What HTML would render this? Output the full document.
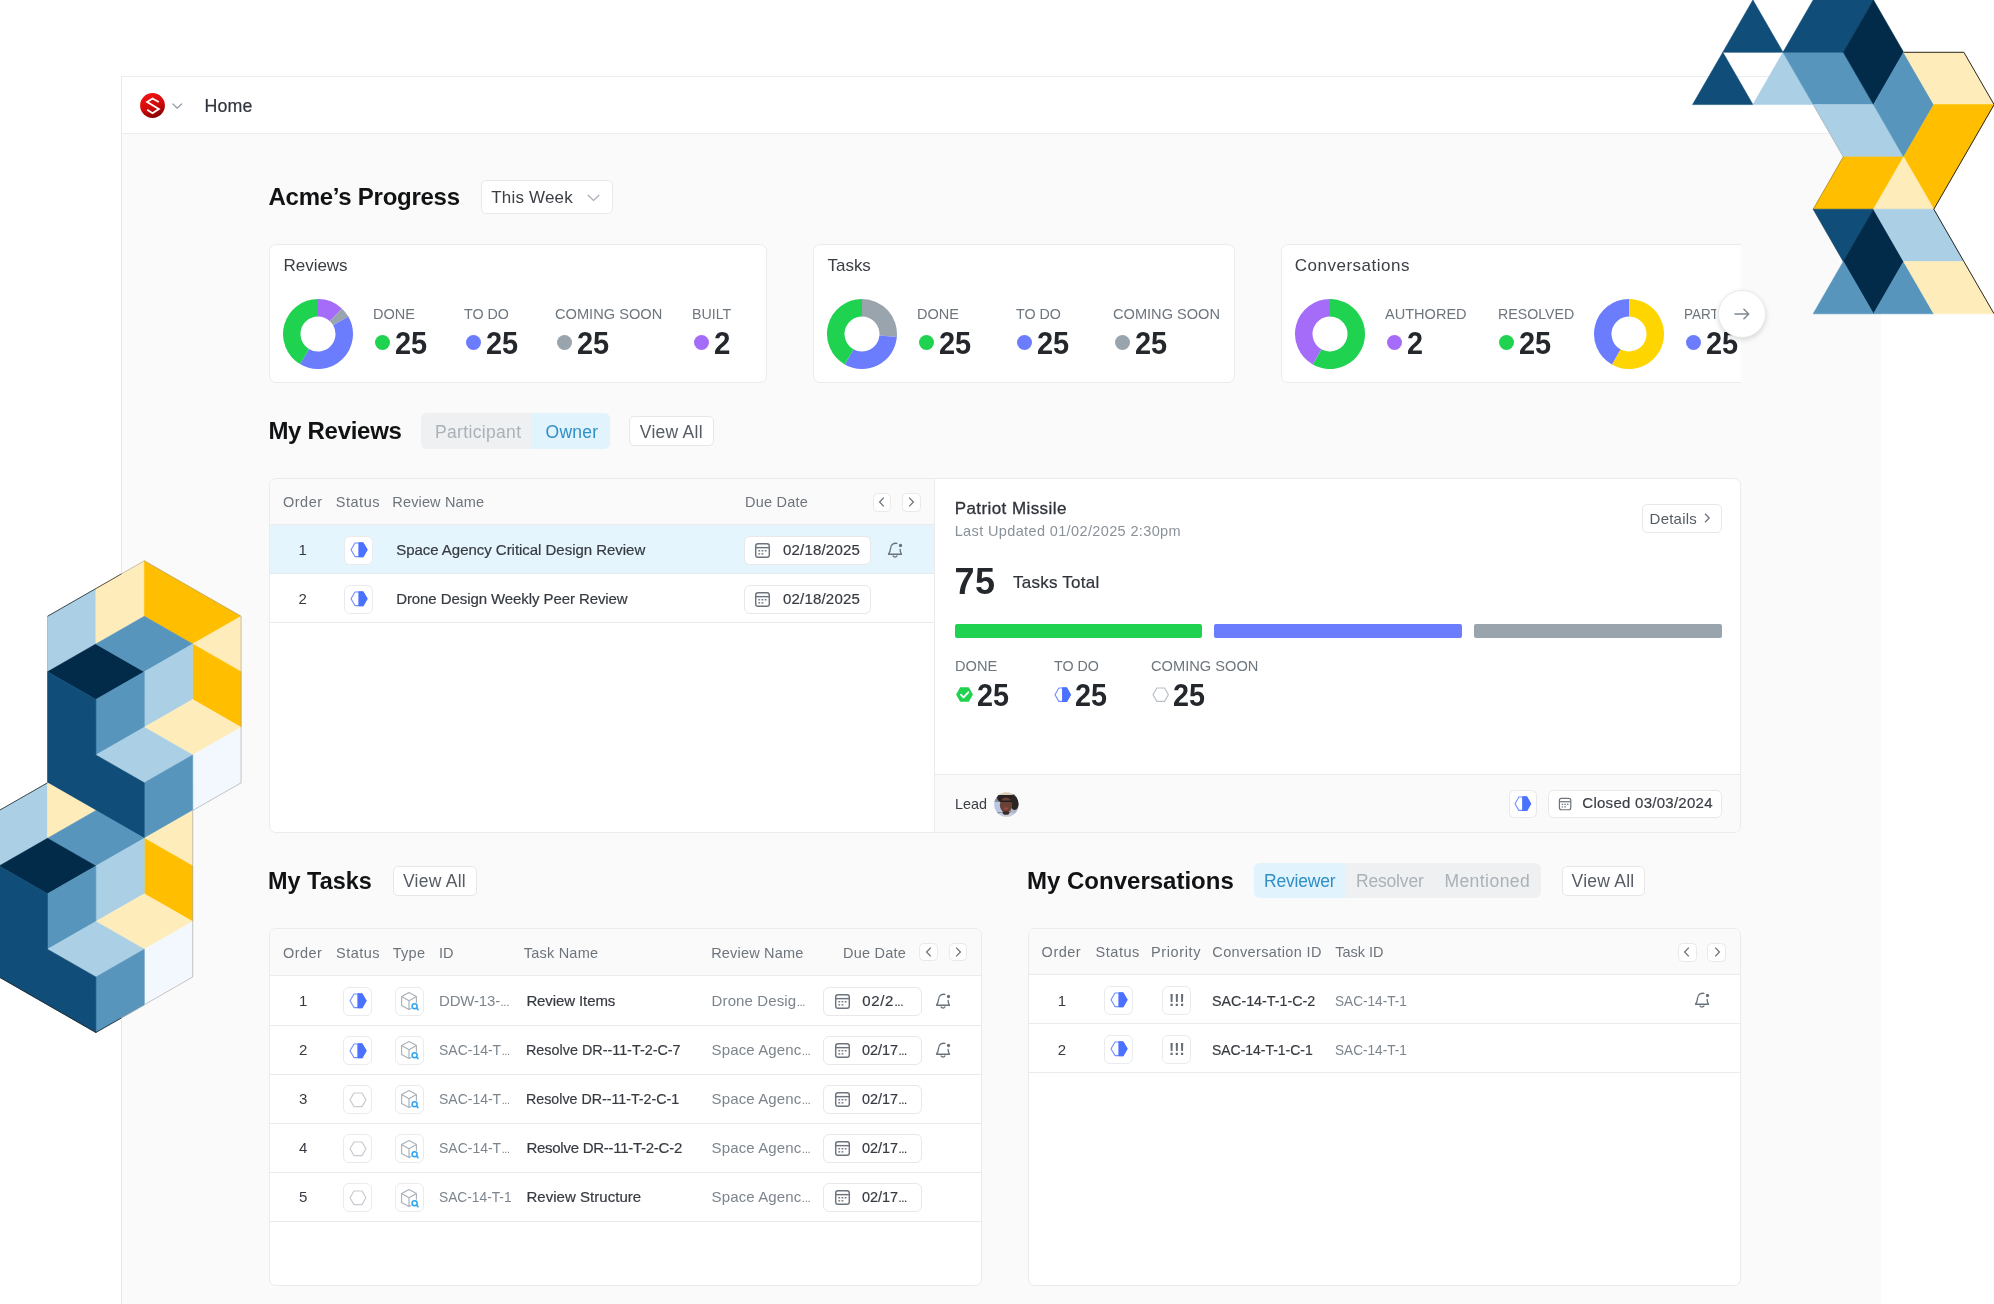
<!DOCTYPE html><html><head><meta charset="utf-8"><title>Home</title><style>html,body{margin:0;padding:0}body{width:1994px;height:1304px;overflow:hidden;background:#fff;position:relative;font-family:"Liberation Sans", sans-serif;}
.a{position:absolute;box-sizing:border-box}.t{position:absolute;white-space:pre;line-height:40px;height:40px}</style></head><body>
<div class="a" style="left:0;top:0;width:1994px;height:1304px;will-change:transform">
<div class="a" style="left:121px;top:76px;width:1760px;height:1240px;background:#fafafa;border-left:1px solid #e9e9e9;border-top:1px solid #ececec;box-sizing:border-box"></div>
<div class="a" style="left:122px;top:77px;width:1759px;height:57px;background:#fff;border-bottom:1px solid #ededed"></div>
<svg class="a" style="left:139px;top:91.5px" width="27" height="27" viewBox="0 0 27 27">
<defs><linearGradient id="lg" x1="0.3" y1="0" x2="0.7" y2="1"><stop offset="0" stop-color="#f51212"/><stop offset="0.55" stop-color="#cf0a0a"/><stop offset="1" stop-color="#7e0000"/></linearGradient></defs>
<circle cx="13.5" cy="13.5" r="12.4" fill="url(#lg)"/>
<path d="M19.8 10 L13.5 6.5 L8.2 10 L19.8 17 L13.5 21.2 L8.2 17.7" fill="none" stroke="#fff" stroke-width="1.9" stroke-linejoin="miter"/></svg>
<svg class="a" style="left:170px;top:100px" width="14" height="12" viewBox="0 0 14 12"><path d="M2.5 3.6 L7.2 8.2 L12 3.6" fill="none" stroke="#8b95a1" stroke-width="1.3"/></svg>
<div class="a" style="left:481px;top:179.5px;width:131.5px;height:34px;background:#fff;border:1px solid #e9e9e9;border-radius:5px;"></div>
<svg class="a" style="left:586px;top:192px" width="15" height="12" viewBox="0 0 15 12"><path d="M1.8 3 L7.5 8.4 L13.2 3" fill="none" stroke="#a7afb8" stroke-width="1.3"/></svg>
<div class="a" style="left:268.5px;top:244px;width:498.5px;height:139px;background:#fff;border:1px solid #ebebeb;border-radius:7px;"></div>
<svg class="a" style="left:282px;top:297.9px" width="72" height="72" viewBox="-36 -36 72 72"><path d="M0.00 -35.00 A35 35 0 0 1 23.87 -25.60 L11.93 -12.80 A17.5 17.5 0 0 0 0.00 -17.50 Z" fill="#a56cf9"/><path d="M23.87 -25.60 A35 35 0 0 1 30.31 -17.50 L15.16 -8.75 A17.5 17.5 0 0 0 11.93 -12.80 Z" fill="#99a4ad"/><path d="M30.31 -17.50 A35 35 0 0 1 -18.03 30.00 L-9.01 15.00 A17.5 17.5 0 0 0 15.16 -8.75 Z" fill="#6b7dfd"/><path d="M-18.03 30.00 A35 35 0 0 1 -0.00 -35.00 L-0.00 -17.50 A17.5 17.5 0 0 0 -9.01 15.00 Z" fill="#1fd24f"/></svg>
<div class="a" style="left:374.8px;top:335.0px;width:15px;height:15px;border-radius:50%;background:#1fd24f"></div>
<div class="a" style="left:465.9px;top:335.0px;width:15px;height:15px;border-radius:50%;background:#6b7dfd"></div>
<div class="a" style="left:556.6px;top:335.0px;width:15px;height:15px;border-radius:50%;background:#99a4ad"></div>
<div class="a" style="left:693.8px;top:335.0px;width:15px;height:15px;border-radius:50%;background:#a56cf9"></div>
<div class="a" style="left:812.5px;top:244px;width:422px;height:139px;background:#fff;border:1px solid #ebebeb;border-radius:7px;"></div>
<svg class="a" style="left:825.7px;top:297.9px" width="72" height="72" viewBox="-36 -36 72 72"><path d="M0.00 -35.00 A35 35 0 0 1 34.87 3.05 L17.43 1.53 A17.5 17.5 0 0 0 0.00 -17.50 Z" fill="#99a4ad"/><path d="M34.87 3.05 A35 35 0 0 1 -17.23 30.46 L-8.62 15.23 A17.5 17.5 0 0 0 17.43 1.53 Z" fill="#6b7dfd"/><path d="M-17.23 30.46 A35 35 0 0 1 -0.00 -35.00 L-0.00 -17.50 A17.5 17.5 0 0 0 -8.62 15.23 Z" fill="#1fd24f"/></svg>
<div class="a" style="left:918.8px;top:335.0px;width:15px;height:15px;border-radius:50%;background:#1fd24f"></div>
<div class="a" style="left:1016.8px;top:335.0px;width:15px;height:15px;border-radius:50%;background:#6b7dfd"></div>
<div class="a" style="left:1115.1px;top:335.0px;width:15px;height:15px;border-radius:50%;background:#99a4ad"></div>
<div class="a" style="left:1280.5px;top:244px;width:460.5px;height:140px;overflow:hidden"><div class="a" style="left:0;top:0;width:520px;height:139px;background:#fff;border:1px solid #ebebeb;border-radius:7px"></div></div>
<svg class="a" style="left:1293.5px;top:298px" width="72" height="72" viewBox="-36 -36 72 72"><path d="M0.00 -35.00 A35 35 0 1 1 -17.23 30.46 L-8.62 15.23 A17.5 17.5 0 1 0 0.00 -17.50 Z" fill="#1fd24f"/><path d="M-17.23 30.46 A35 35 0 0 1 -0.00 -35.00 L-0.00 -17.50 A17.5 17.5 0 0 0 -8.62 15.23 Z" fill="#a56cf9"/></svg>
<div class="a" style="left:1386.5px;top:335.0px;width:15px;height:15px;border-radius:50%;background:#a56cf9"></div>
<div class="a" style="left:1499.3px;top:335.0px;width:15px;height:15px;border-radius:50%;background:#1fd24f"></div>
<svg class="a" style="left:1593px;top:298px" width="72" height="72" viewBox="-36 -36 72 72"><path d="M0.00 -35.00 A35 35 0 1 1 -16.97 30.61 L-8.48 15.31 A17.5 17.5 0 1 0 0.00 -17.50 Z" fill="#ffd500"/><path d="M-16.97 30.61 A35 35 0 0 1 -0.00 -35.00 L-0.00 -17.50 A17.5 17.5 0 0 0 -8.48 15.31 Z" fill="#6b7dfd"/></svg>
<div class="a" style="left:1686.0px;top:335.0px;width:15px;height:15px;border-radius:50%;background:#6b7dfd"></div>
<div class="a" style="left:421px;top:413px;width:188.5px;height:35.5px;background:#eef0f1;border-radius:6px;"></div>
<div class="a" style="left:532px;top:413px;width:77.5px;height:35.5px;background:#e1f3fc;border-radius:0 6px 6px 0"></div>
<div class="a" style="left:629px;top:416px;width:84.5px;height:30px;background:#fff;border:1px solid #e7e7e7;border-radius:5px;"></div>
<div class="a" style="left:268.5px;top:478px;width:1472.5px;height:355px;background:#fff;border:1px solid #ebebeb;border-radius:7px;overflow:hidden"><div class="a" style="left:0;top:0;width:665px;height:46px;background:#fafafa;border-bottom:1px solid #ebebeb"></div><div class="a" style="left:0;top:46px;width:665px;height:49px;background:#e5f5fd;border-bottom:1px solid #e4ecf0"></div><div class="a" style="left:0;top:95px;width:665px;height:49px;border-bottom:1px solid #ebebeb"></div><div class="a" style="left:664.5px;top:0;width:1px;height:354px;background:#ebebeb"></div><div class="a" style="left:665.5px;top:295px;width:810px;height:62px;background:#fafafa;border-top:1px solid #ebebeb"></div></div>
<div class="a" style="left:872.5px;top:493px;width:18.5px;height:18.5px;background:#fff;border:1px solid #e9e9e9;border-radius:4.5px;"></div>
<svg class="a" style="left:872.75px;top:493.25px" width="18" height="18" viewBox="0 0 18 18"><path d="M10.8 4.6 L6.6 9 L10.8 13.4" fill="none" stroke="#6b747d" stroke-width="1.3"/></svg>
<div class="a" style="left:902px;top:493px;width:18.5px;height:18.5px;background:#fff;border:1px solid #e9e9e9;border-radius:4.5px;"></div>
<svg class="a" style="left:902.25px;top:493.25px" width="18" height="18" viewBox="0 0 18 18"><path d="M7.2 4.6 L11.4 9 L7.2 13.4" fill="none" stroke="#6b747d" stroke-width="1.3"/></svg>
<div class="a" style="left:344px;top:536px;width:29px;height:29px;background:#fff;border:1px solid #eaebec;border-radius:6px;"></div>
<svg class="a" style="left:349.0px;top:541.4000000000001px" width="20" height="17.6" viewBox="-10.0 -8.8 20 17.6"><polygon points="0,-6.80 4.00,-6.80 8.00,0 4.00,6.80 0,6.80" fill="#4b72ff" stroke="#4b72ff" stroke-width="1.25" stroke-linejoin="round"/><polygon points="-8.00,0.00 -4.00,-6.80 4.00,-6.80 8.00,0.00 4.00,6.80 -4.00,6.80" fill="none" stroke="#4b72ff" stroke-width="1.1" stroke-opacity="0.8" stroke-linejoin="round"/></svg>
<div class="a" style="left:743.5px;top:536px;width:127px;height:29px;background:#fff;border:1px solid #e8e8e8;border-radius:6px;"></div>
<svg class="a" style="left:754.4px;top:541.6px" width="17" height="17" viewBox="-1 -1 16 16">
<rect x="0.6" y="0.6" width="12.8" height="12.8" rx="2.2" fill="none" stroke="#6b747d" stroke-width="1.35"/>
<path d="M0.6 4.3 H13.4" stroke="#6b747d" stroke-width="1.35"/>
<g fill="#6b747d"><rect x="3.1" y="6.6" width="1.7" height="1.3"/><rect x="6.1" y="6.6" width="1.7" height="1.3"/><rect x="9.1" y="6.6" width="1.7" height="1.3"/><rect x="3.1" y="9.5" width="1.7" height="1.3"/><rect x="6.1" y="9.5" width="1.7" height="1.3"/></g></svg>
<div class="a" style="left:344px;top:585px;width:29px;height:29px;background:#fff;border:1px solid #eaebec;border-radius:6px;"></div>
<svg class="a" style="left:349.0px;top:590.4000000000001px" width="20" height="17.6" viewBox="-10.0 -8.8 20 17.6"><polygon points="0,-6.80 4.00,-6.80 8.00,0 4.00,6.80 0,6.80" fill="#4b72ff" stroke="#4b72ff" stroke-width="1.25" stroke-linejoin="round"/><polygon points="-8.00,0.00 -4.00,-6.80 4.00,-6.80 8.00,0.00 4.00,6.80 -4.00,6.80" fill="none" stroke="#4b72ff" stroke-width="1.1" stroke-opacity="0.8" stroke-linejoin="round"/></svg>
<div class="a" style="left:743.5px;top:585px;width:127px;height:29px;background:#fff;border:1px solid #e8e8e8;border-radius:6px;"></div>
<svg class="a" style="left:754.4px;top:590.6px" width="17" height="17" viewBox="-1 -1 16 16">
<rect x="0.6" y="0.6" width="12.8" height="12.8" rx="2.2" fill="none" stroke="#6b747d" stroke-width="1.35"/>
<path d="M0.6 4.3 H13.4" stroke="#6b747d" stroke-width="1.35"/>
<g fill="#6b747d"><rect x="3.1" y="6.6" width="1.7" height="1.3"/><rect x="6.1" y="6.6" width="1.7" height="1.3"/><rect x="9.1" y="6.6" width="1.7" height="1.3"/><rect x="3.1" y="9.5" width="1.7" height="1.3"/><rect x="6.1" y="9.5" width="1.7" height="1.3"/></g></svg>
<svg class="a" style="left:886.4px;top:540.9px" width="18.4" height="18.4" viewBox="-9 -9 18 18">
<path d="M1.6 -6.6 C-0.2 -7.2 -4.4 -6.4 -4.6 -1.6 C-4.7 1.2 -5.6 2.6 -6.6 4 H6.2 C5.4 2.8 4.9 1.6 4.8 -0.8" fill="none" stroke="#69727b" stroke-width="1.3" stroke-linecap="round" stroke-linejoin="round"/>
<path d="M-2 5.6 C-1.4 7 1 7 1.6 5.6" fill="none" stroke="#69727b" stroke-width="1.3" stroke-linecap="round"/>
<circle cx="5.2" cy="-4.6" r="1.6" fill="#69727b"/></svg>
<div class="a" style="left:1642px;top:503.5px;width:79.5px;height:29px;background:#fff;border:1px solid #e8e8e8;border-radius:5px;"></div>
<svg class="a" style="left:1701px;top:511px" width="12" height="14" viewBox="0 0 12 14"><path d="M4 2.8 L8.2 7 L4 11.2" fill="none" stroke="#6b747d" stroke-width="1.3"/></svg>
<div class="a" style="left:954.5px;top:624px;width:247.5px;height:14px;background:#1fd24f;border-radius:2px;"></div>
<div class="a" style="left:1214px;top:624px;width:247.5px;height:14px;background:#6b7dfd;border-radius:2px;"></div>
<div class="a" style="left:1474px;top:624px;width:247.5px;height:14px;background:#99a4ad;border-radius:2px;"></div>
<svg class="a" style="left:954.5px;top:686.2px" width="19" height="17" viewBox="-9.5 -8.5 19 17"><polygon points="-7.50,0.00 -3.75,-6.50 3.75,-6.50 7.50,0.00 3.75,6.50 -3.75,6.50" fill="#1fd24f" stroke="#1fd24f" stroke-width="1.6" stroke-linejoin="round"/><path d="M-3.6 0.2 L-1 2.8 L3.8 -2.2" fill="none" stroke="#fff" stroke-width="1.9" stroke-linecap="round" stroke-linejoin="round"/></svg>
<svg class="a" style="left:1052.5px;top:686.0px" width="19.4" height="17.4" viewBox="-9.7 -8.7 19.4 17.4"><polygon points="0,-6.70 3.85,-6.70 7.70,0 3.85,6.70 0,6.70" fill="#4b72ff" stroke="#4b72ff" stroke-width="1.25" stroke-linejoin="round"/><polygon points="-7.70,0.00 -3.85,-6.70 3.85,-6.70 7.70,0.00 3.85,6.70 -3.85,6.70" fill="none" stroke="#4b72ff" stroke-width="1.1" stroke-opacity="0.8" stroke-linejoin="round"/></svg>
<svg class="a" style="left:1150.8999999999999px;top:686.0px" width="19.4" height="17.4" viewBox="-9.7 -8.7 19.4 17.4"><polygon points="-7.70,0.00 -3.85,-6.70 3.85,-6.70 7.70,0.00 3.85,6.70 -3.85,6.70" fill="none" stroke="#b9c0c6" stroke-width="1.2" stroke-linejoin="round"/></svg>
<svg class="a" style="left:993.5px;top:791.5px" width="25" height="25" viewBox="0 0 25 25"><defs><clipPath id="av"><circle cx="12.5" cy="12.5" r="12.3"/></clipPath></defs>
<filter id="bl" x="-20%" y="-20%" width="140%" height="140%"><feGaussianBlur stdDeviation="0.7"/></filter><g clip-path="url(#av)"><g filter="url(#bl)"><rect x="-3" y="-3" width="31" height="31" fill="#8d8f9a"/><rect x="0" y="10" width="8" height="10" fill="#b9c6e6"/><rect x="17" y="14" width="8" height="11" fill="#aeb4c4"/>
<ellipse cx="12.5" cy="5.5" rx="9.5" ry="6" fill="#2a2422"/><rect x="3" y="0" width="19" height="3" fill="#d9cdb4"/><ellipse cx="20.5" cy="10" rx="4.5" ry="8" fill="#2b2523"/>
<ellipse cx="12" cy="13" rx="6.2" ry="7.6" fill="#6a4236"/><rect x="6.5" y="8.6" width="11.5" height="1.3" fill="#1d1a1a"/><ellipse cx="11.8" cy="16.5" rx="2.2" ry="1.2" fill="#9a4a4a"/>
<path d="M2 25 C4 20 8 20.5 12 21.5 C16 20.5 21 20 23 25 Z" fill="#c5cce0"/><ellipse cx="12" cy="21" rx="3.4" ry="1.8" fill="#3a2a26"/></g></g></svg>
<div class="a" style="left:1509px;top:789.5px;width:28px;height:28px;background:#fff;border:1px solid #e8e8e8;border-radius:5.5px;"></div>
<svg class="a" style="left:1513.2px;top:794.9px" width="19.6" height="17.4" viewBox="-9.8 -8.7 19.6 17.4"><polygon points="0,-6.70 3.90,-6.70 7.80,0 3.90,6.70 0,6.70" fill="#4b72ff" stroke="#4b72ff" stroke-width="1.25" stroke-linejoin="round"/><polygon points="-7.80,0.00 -3.90,-6.70 3.90,-6.70 7.80,0.00 3.90,6.70 -3.90,6.70" fill="none" stroke="#4b72ff" stroke-width="1.1" stroke-opacity="0.8" stroke-linejoin="round"/></svg>
<div class="a" style="left:1548px;top:789.5px;width:173.5px;height:28px;background:#fff;border:1px solid #e8e8e8;border-radius:5.5px;"></div>
<svg class="a" style="left:1557.8px;top:796.8px" width="14.2" height="14.2" viewBox="-1 -1 16 16">
<rect x="0.6" y="0.6" width="12.8" height="12.8" rx="2.2" fill="none" stroke="#6b747d" stroke-width="1.35"/>
<path d="M0.6 4.3 H13.4" stroke="#6b747d" stroke-width="1.35"/>
<g fill="#6b747d"><rect x="3.1" y="6.6" width="1.7" height="1.3"/><rect x="6.1" y="6.6" width="1.7" height="1.3"/><rect x="9.1" y="6.6" width="1.7" height="1.3"/><rect x="3.1" y="9.5" width="1.7" height="1.3"/><rect x="6.1" y="9.5" width="1.7" height="1.3"/></g></svg>
<div class="a" style="left:392.5px;top:865.5px;width:84px;height:30px;background:#fff;border:1px solid #e7e7e7;border-radius:5px;"></div>
<div class="a" style="left:268.5px;top:928px;width:713.5px;height:358px;background:#fff;border:1px solid #ebebeb;border-radius:7px;overflow:hidden"><div class="a" style="left:0;top:0;width:713px;height:47px;background:#fafafa;border-bottom:1px solid #ebebeb"></div><div class="a" style="left:0;top:95.6px;width:713px;height:1px;background:#ebebeb"></div><div class="a" style="left:0;top:144.7px;width:713px;height:1px;background:#ebebeb"></div><div class="a" style="left:0;top:193.79999999999998px;width:713px;height:1px;background:#ebebeb"></div><div class="a" style="left:0;top:242.9px;width:713px;height:1px;background:#ebebeb"></div><div class="a" style="left:0;top:292.0px;width:713px;height:1px;background:#ebebeb"></div></div>
<div class="a" style="left:919.4px;top:942.8px;width:18.5px;height:18.5px;background:#fff;border:1px solid #e9e9e9;border-radius:4.5px;"></div>
<svg class="a" style="left:919.65px;top:943.05px" width="18" height="18" viewBox="0 0 18 18"><path d="M10.8 4.6 L6.6 9 L10.8 13.4" fill="none" stroke="#6b747d" stroke-width="1.3"/></svg>
<div class="a" style="left:948.6px;top:942.8px;width:18.5px;height:18.5px;background:#fff;border:1px solid #e9e9e9;border-radius:4.5px;"></div>
<svg class="a" style="left:948.85px;top:943.05px" width="18" height="18" viewBox="0 0 18 18"><path d="M7.2 4.6 L11.4 9 L7.2 13.4" fill="none" stroke="#6b747d" stroke-width="1.3"/></svg>
<div class="a" style="left:343px;top:987px;width:29px;height:29px;background:#fff;border:1px solid #eaebec;border-radius:6px;"></div>
<svg class="a" style="left:347.7px;top:992.4000000000001px" width="20" height="17.6" viewBox="-10.0 -8.8 20 17.6"><polygon points="0,-6.80 4.00,-6.80 8.00,0 4.00,6.80 0,6.80" fill="#4b72ff" stroke="#4b72ff" stroke-width="1.25" stroke-linejoin="round"/><polygon points="-8.00,0.00 -4.00,-6.80 4.00,-6.80 8.00,0.00 4.00,6.80 -4.00,6.80" fill="none" stroke="#4b72ff" stroke-width="1.1" stroke-opacity="0.8" stroke-linejoin="round"/></svg>
<div class="a" style="left:395px;top:987px;width:29px;height:29px;background:#fff;border:1px solid #eaebec;border-radius:6px;"></div>
<svg class="a" style="left:399.2px;top:991.2px" width="20" height="20" viewBox="-10 -10 20 20">
<path d="M0 -8.4 L7.4 -4.4 V1.2 M2 7.6 L0 8.6 L-7.4 4.6 V-4.4 L0 -8.4 M-7.4 -4.4 L0 -0.2 L7.4 -4.4 M0 -0.2 V8.4" fill="none" stroke="#a9b1b9" stroke-width="1.15" stroke-linejoin="round" stroke-linecap="round"/>
<circle cx="5.6" cy="5.2" r="2.5" fill="#fff" stroke="#2da4f4" stroke-width="1.5"/><path d="M7.4 7 L9 8.6" stroke="#2da4f4" stroke-width="1.5" stroke-linecap="round"/></svg>
<div class="a" style="left:823px;top:987px;width:98.5px;height:29px;background:#fff;border:1px solid #e8e8e8;border-radius:6px;"></div>
<svg class="a" style="left:834px;top:992.6px" width="17" height="17" viewBox="-1 -1 16 16">
<rect x="0.6" y="0.6" width="12.8" height="12.8" rx="2.2" fill="none" stroke="#6b747d" stroke-width="1.35"/>
<path d="M0.6 4.3 H13.4" stroke="#6b747d" stroke-width="1.35"/>
<g fill="#6b747d"><rect x="3.1" y="6.6" width="1.7" height="1.3"/><rect x="6.1" y="6.6" width="1.7" height="1.3"/><rect x="9.1" y="6.6" width="1.7" height="1.3"/><rect x="3.1" y="9.5" width="1.7" height="1.3"/><rect x="6.1" y="9.5" width="1.7" height="1.3"/></g></svg>
<svg class="a" style="left:934.1999999999999px;top:991.7px" width="18.4" height="18.4" viewBox="-9 -9 18 18">
<path d="M1.6 -6.6 C-0.2 -7.2 -4.4 -6.4 -4.6 -1.6 C-4.7 1.2 -5.6 2.6 -6.6 4 H6.2 C5.4 2.8 4.9 1.6 4.8 -0.8" fill="none" stroke="#69727b" stroke-width="1.3" stroke-linecap="round" stroke-linejoin="round"/>
<path d="M-2 5.6 C-1.4 7 1 7 1.6 5.6" fill="none" stroke="#69727b" stroke-width="1.3" stroke-linecap="round"/>
<circle cx="5.2" cy="-4.6" r="1.6" fill="#69727b"/></svg>
<div class="a" style="left:343px;top:1036px;width:29px;height:29px;background:#fff;border:1px solid #eaebec;border-radius:6px;"></div>
<svg class="a" style="left:347.7px;top:1041.5px" width="20" height="17.6" viewBox="-10.0 -8.8 20 17.6"><polygon points="0,-6.80 4.00,-6.80 8.00,0 4.00,6.80 0,6.80" fill="#4b72ff" stroke="#4b72ff" stroke-width="1.25" stroke-linejoin="round"/><polygon points="-8.00,0.00 -4.00,-6.80 4.00,-6.80 8.00,0.00 4.00,6.80 -4.00,6.80" fill="none" stroke="#4b72ff" stroke-width="1.1" stroke-opacity="0.8" stroke-linejoin="round"/></svg>
<div class="a" style="left:395px;top:1036px;width:29px;height:29px;background:#fff;border:1px solid #eaebec;border-radius:6px;"></div>
<svg class="a" style="left:399.2px;top:1040.3px" width="20" height="20" viewBox="-10 -10 20 20">
<path d="M0 -8.4 L7.4 -4.4 V1.2 M2 7.6 L0 8.6 L-7.4 4.6 V-4.4 L0 -8.4 M-7.4 -4.4 L0 -0.2 L7.4 -4.4 M0 -0.2 V8.4" fill="none" stroke="#a9b1b9" stroke-width="1.15" stroke-linejoin="round" stroke-linecap="round"/>
<circle cx="5.6" cy="5.2" r="2.5" fill="#fff" stroke="#2da4f4" stroke-width="1.5"/><path d="M7.4 7 L9 8.6" stroke="#2da4f4" stroke-width="1.5" stroke-linecap="round"/></svg>
<div class="a" style="left:823px;top:1036px;width:98.5px;height:29px;background:#fff;border:1px solid #e8e8e8;border-radius:6px;"></div>
<svg class="a" style="left:834px;top:1041.7px" width="17" height="17" viewBox="-1 -1 16 16">
<rect x="0.6" y="0.6" width="12.8" height="12.8" rx="2.2" fill="none" stroke="#6b747d" stroke-width="1.35"/>
<path d="M0.6 4.3 H13.4" stroke="#6b747d" stroke-width="1.35"/>
<g fill="#6b747d"><rect x="3.1" y="6.6" width="1.7" height="1.3"/><rect x="6.1" y="6.6" width="1.7" height="1.3"/><rect x="9.1" y="6.6" width="1.7" height="1.3"/><rect x="3.1" y="9.5" width="1.7" height="1.3"/><rect x="6.1" y="9.5" width="1.7" height="1.3"/></g></svg>
<svg class="a" style="left:934.1999999999999px;top:1040.8px" width="18.4" height="18.4" viewBox="-9 -9 18 18">
<path d="M1.6 -6.6 C-0.2 -7.2 -4.4 -6.4 -4.6 -1.6 C-4.7 1.2 -5.6 2.6 -6.6 4 H6.2 C5.4 2.8 4.9 1.6 4.8 -0.8" fill="none" stroke="#69727b" stroke-width="1.3" stroke-linecap="round" stroke-linejoin="round"/>
<path d="M-2 5.6 C-1.4 7 1 7 1.6 5.6" fill="none" stroke="#69727b" stroke-width="1.3" stroke-linecap="round"/>
<circle cx="5.2" cy="-4.6" r="1.6" fill="#69727b"/></svg>
<div class="a" style="left:343px;top:1085px;width:29px;height:29px;background:#fff;border:1px solid #eaebec;border-radius:6px;"></div>
<svg class="a" style="left:347.7px;top:1090.6000000000001px" width="20" height="17.6" viewBox="-10.0 -8.8 20 17.6"><polygon points="-8.00,0.00 -4.00,-6.80 4.00,-6.80 8.00,0.00 4.00,6.80 -4.00,6.80" fill="none" stroke="#c7cbd0" stroke-width="1.2" stroke-linejoin="round"/></svg>
<div class="a" style="left:395px;top:1085px;width:29px;height:29px;background:#fff;border:1px solid #eaebec;border-radius:6px;"></div>
<svg class="a" style="left:399.2px;top:1089.4px" width="20" height="20" viewBox="-10 -10 20 20">
<path d="M0 -8.4 L7.4 -4.4 V1.2 M2 7.6 L0 8.6 L-7.4 4.6 V-4.4 L0 -8.4 M-7.4 -4.4 L0 -0.2 L7.4 -4.4 M0 -0.2 V8.4" fill="none" stroke="#a9b1b9" stroke-width="1.15" stroke-linejoin="round" stroke-linecap="round"/>
<circle cx="5.6" cy="5.2" r="2.5" fill="#fff" stroke="#2da4f4" stroke-width="1.5"/><path d="M7.4 7 L9 8.6" stroke="#2da4f4" stroke-width="1.5" stroke-linecap="round"/></svg>
<div class="a" style="left:823px;top:1085px;width:98.5px;height:29px;background:#fff;border:1px solid #e8e8e8;border-radius:6px;"></div>
<svg class="a" style="left:834px;top:1090.8000000000002px" width="17" height="17" viewBox="-1 -1 16 16">
<rect x="0.6" y="0.6" width="12.8" height="12.8" rx="2.2" fill="none" stroke="#6b747d" stroke-width="1.35"/>
<path d="M0.6 4.3 H13.4" stroke="#6b747d" stroke-width="1.35"/>
<g fill="#6b747d"><rect x="3.1" y="6.6" width="1.7" height="1.3"/><rect x="6.1" y="6.6" width="1.7" height="1.3"/><rect x="9.1" y="6.6" width="1.7" height="1.3"/><rect x="3.1" y="9.5" width="1.7" height="1.3"/><rect x="6.1" y="9.5" width="1.7" height="1.3"/></g></svg>
<div class="a" style="left:343px;top:1134px;width:29px;height:29px;background:#fff;border:1px solid #eaebec;border-radius:6px;"></div>
<svg class="a" style="left:347.7px;top:1139.7px" width="20" height="17.6" viewBox="-10.0 -8.8 20 17.6"><polygon points="-8.00,0.00 -4.00,-6.80 4.00,-6.80 8.00,0.00 4.00,6.80 -4.00,6.80" fill="none" stroke="#c7cbd0" stroke-width="1.2" stroke-linejoin="round"/></svg>
<div class="a" style="left:395px;top:1134px;width:29px;height:29px;background:#fff;border:1px solid #eaebec;border-radius:6px;"></div>
<svg class="a" style="left:399.2px;top:1138.5px" width="20" height="20" viewBox="-10 -10 20 20">
<path d="M0 -8.4 L7.4 -4.4 V1.2 M2 7.6 L0 8.6 L-7.4 4.6 V-4.4 L0 -8.4 M-7.4 -4.4 L0 -0.2 L7.4 -4.4 M0 -0.2 V8.4" fill="none" stroke="#a9b1b9" stroke-width="1.15" stroke-linejoin="round" stroke-linecap="round"/>
<circle cx="5.6" cy="5.2" r="2.5" fill="#fff" stroke="#2da4f4" stroke-width="1.5"/><path d="M7.4 7 L9 8.6" stroke="#2da4f4" stroke-width="1.5" stroke-linecap="round"/></svg>
<div class="a" style="left:823px;top:1134px;width:98.5px;height:29px;background:#fff;border:1px solid #e8e8e8;border-radius:6px;"></div>
<svg class="a" style="left:834px;top:1139.9px" width="17" height="17" viewBox="-1 -1 16 16">
<rect x="0.6" y="0.6" width="12.8" height="12.8" rx="2.2" fill="none" stroke="#6b747d" stroke-width="1.35"/>
<path d="M0.6 4.3 H13.4" stroke="#6b747d" stroke-width="1.35"/>
<g fill="#6b747d"><rect x="3.1" y="6.6" width="1.7" height="1.3"/><rect x="6.1" y="6.6" width="1.7" height="1.3"/><rect x="9.1" y="6.6" width="1.7" height="1.3"/><rect x="3.1" y="9.5" width="1.7" height="1.3"/><rect x="6.1" y="9.5" width="1.7" height="1.3"/></g></svg>
<div class="a" style="left:343px;top:1183px;width:29px;height:29px;background:#fff;border:1px solid #eaebec;border-radius:6px;"></div>
<svg class="a" style="left:347.7px;top:1188.8000000000002px" width="20" height="17.6" viewBox="-10.0 -8.8 20 17.6"><polygon points="-8.00,0.00 -4.00,-6.80 4.00,-6.80 8.00,0.00 4.00,6.80 -4.00,6.80" fill="none" stroke="#c7cbd0" stroke-width="1.2" stroke-linejoin="round"/></svg>
<div class="a" style="left:395px;top:1183px;width:29px;height:29px;background:#fff;border:1px solid #eaebec;border-radius:6px;"></div>
<svg class="a" style="left:399.2px;top:1187.6000000000001px" width="20" height="20" viewBox="-10 -10 20 20">
<path d="M0 -8.4 L7.4 -4.4 V1.2 M2 7.6 L0 8.6 L-7.4 4.6 V-4.4 L0 -8.4 M-7.4 -4.4 L0 -0.2 L7.4 -4.4 M0 -0.2 V8.4" fill="none" stroke="#a9b1b9" stroke-width="1.15" stroke-linejoin="round" stroke-linecap="round"/>
<circle cx="5.6" cy="5.2" r="2.5" fill="#fff" stroke="#2da4f4" stroke-width="1.5"/><path d="M7.4 7 L9 8.6" stroke="#2da4f4" stroke-width="1.5" stroke-linecap="round"/></svg>
<div class="a" style="left:823px;top:1183px;width:98.5px;height:29px;background:#fff;border:1px solid #e8e8e8;border-radius:6px;"></div>
<svg class="a" style="left:834px;top:1189.0000000000002px" width="17" height="17" viewBox="-1 -1 16 16">
<rect x="0.6" y="0.6" width="12.8" height="12.8" rx="2.2" fill="none" stroke="#6b747d" stroke-width="1.35"/>
<path d="M0.6 4.3 H13.4" stroke="#6b747d" stroke-width="1.35"/>
<g fill="#6b747d"><rect x="3.1" y="6.6" width="1.7" height="1.3"/><rect x="6.1" y="6.6" width="1.7" height="1.3"/><rect x="9.1" y="6.6" width="1.7" height="1.3"/><rect x="3.1" y="9.5" width="1.7" height="1.3"/><rect x="6.1" y="9.5" width="1.7" height="1.3"/></g></svg>
<div class="a" style="left:1253.5px;top:863px;width:287.5px;height:35px;background:#eef0f1;border-radius:6px;"></div>
<div class="a" style="left:1253.5px;top:863px;width:92px;height:35px;background:#e1f3fc;border-radius:6px 0 0 6px"></div>
<div class="a" style="left:1561.5px;top:865.5px;width:83.5px;height:30px;background:#fff;border:1px solid #e7e7e7;border-radius:5px;"></div>
<div class="a" style="left:1027.5px;top:928px;width:713.5px;height:358px;background:#fff;border:1px solid #ebebeb;border-radius:7px;overflow:hidden"><div class="a" style="left:0;top:0;width:713px;height:46px;background:#fafafa;border-bottom:1px solid #ebebeb"></div><div class="a" style="left:0;top:94px;width:713px;height:1px;background:#ebebeb"></div><div class="a" style="left:0;top:143px;width:713px;height:1px;background:#ebebeb"></div></div>
<div class="a" style="left:1678.2px;top:943.2px;width:18.5px;height:18.5px;background:#fff;border:1px solid #e9e9e9;border-radius:4.5px;"></div>
<svg class="a" style="left:1678.45px;top:943.45px" width="18" height="18" viewBox="0 0 18 18"><path d="M10.8 4.6 L6.6 9 L10.8 13.4" fill="none" stroke="#6b747d" stroke-width="1.3"/></svg>
<div class="a" style="left:1707.4px;top:943.2px;width:18.5px;height:18.5px;background:#fff;border:1px solid #e9e9e9;border-radius:4.5px;"></div>
<svg class="a" style="left:1707.65px;top:943.45px" width="18" height="18" viewBox="0 0 18 18"><path d="M7.2 4.6 L11.4 9 L7.2 13.4" fill="none" stroke="#6b747d" stroke-width="1.3"/></svg>
<div class="a" style="left:1104px;top:986px;width:29px;height:29px;background:#fff;border:1px solid #eaebec;border-radius:6px;"></div>
<svg class="a" style="left:1109.0px;top:991.4000000000001px" width="20" height="17.6" viewBox="-10.0 -8.8 20 17.6"><polygon points="0,-6.80 4.00,-6.80 8.00,0 4.00,6.80 0,6.80" fill="#4b72ff" stroke="#4b72ff" stroke-width="1.25" stroke-linejoin="round"/><polygon points="-8.00,0.00 -4.00,-6.80 4.00,-6.80 8.00,0.00 4.00,6.80 -4.00,6.80" fill="none" stroke="#4b72ff" stroke-width="1.1" stroke-opacity="0.8" stroke-linejoin="round"/></svg>
<div class="a" style="left:1162px;top:986px;width:29px;height:29px;background:#fff;border:1px solid #eaebec;border-radius:6px;"></div>
<svg class="a" style="left:1692.8px;top:990.7px" width="18.4" height="18.4" viewBox="-9 -9 18 18">
<path d="M1.6 -6.6 C-0.2 -7.2 -4.4 -6.4 -4.6 -1.6 C-4.7 1.2 -5.6 2.6 -6.6 4 H6.2 C5.4 2.8 4.9 1.6 4.8 -0.8" fill="none" stroke="#69727b" stroke-width="1.3" stroke-linecap="round" stroke-linejoin="round"/>
<path d="M-2 5.6 C-1.4 7 1 7 1.6 5.6" fill="none" stroke="#69727b" stroke-width="1.3" stroke-linecap="round"/>
<circle cx="5.2" cy="-4.6" r="1.6" fill="#69727b"/></svg>
<div class="a" style="left:1104px;top:1035px;width:29px;height:29px;background:#fff;border:1px solid #eaebec;border-radius:6px;"></div>
<svg class="a" style="left:1109.0px;top:1040.4px" width="20" height="17.6" viewBox="-10.0 -8.8 20 17.6"><polygon points="0,-6.80 4.00,-6.80 8.00,0 4.00,6.80 0,6.80" fill="#4b72ff" stroke="#4b72ff" stroke-width="1.25" stroke-linejoin="round"/><polygon points="-8.00,0.00 -4.00,-6.80 4.00,-6.80 8.00,0.00 4.00,6.80 -4.00,6.80" fill="none" stroke="#4b72ff" stroke-width="1.1" stroke-opacity="0.8" stroke-linejoin="round"/></svg>
<div class="a" style="left:1162px;top:1035px;width:29px;height:29px;background:#fff;border:1px solid #eaebec;border-radius:6px;"></div>
<span class="t" style="top:86px;font-size:17.8px;color:#30343b;letter-spacing:0.191px;-webkit-text-stroke:0.2px #30343b;left:204.4px;">Home</span>
<span class="t" style="top:177px;font-size:24px;color:#111214;font-weight:700;letter-spacing:-0.261px;left:268.5px;">Acme’s Progress</span>
<span class="t" style="top:178px;font-size:17px;color:#3b4047;letter-spacing:0.200px;left:491.2px;">This Week</span>
<span class="t" style="top:246px;font-size:17px;color:#3a3e45;letter-spacing:-0.021px;left:283.5px;">Reviews</span>
<span class="t" style="top:294px;font-size:15.5px;color:#6d757d;transform-origin:0 50%;transform:scaleX(0.9376);left:372.8px;">DONE</span>
<span class="t" style="top:323px;font-size:31.5px;color:#24272c;font-weight:700;transform-origin:0 50%;transform:scaleX(0.9188);left:395.3px;">25</span>
<span class="t" style="top:294px;font-size:15.5px;color:#6d757d;transform-origin:0 50%;transform:scaleX(0.9219);left:464px;">TO DO</span>
<span class="t" style="top:323px;font-size:31.5px;color:#24272c;font-weight:700;transform-origin:0 50%;transform:scaleX(0.9188);left:486px;">25</span>
<span class="t" style="top:294px;font-size:15.5px;color:#6d757d;transform-origin:0 50%;transform:scaleX(0.9431);left:554.8px;">COMING SOON</span>
<span class="t" style="top:323px;font-size:31.5px;color:#24272c;font-weight:700;transform-origin:0 50%;transform:scaleX(0.9188);left:576.6px;">25</span>
<span class="t" style="top:294px;font-size:15.5px;color:#6d757d;transform-origin:0 50%;transform:scaleX(0.9163);left:692px;">BUILT</span>
<span class="t" style="top:323px;font-size:31.5px;color:#24272c;font-weight:700;transform-origin:0 50%;transform:scaleX(0.9355);left:713.8px;">2</span>
<span class="t" style="top:246px;font-size:17px;color:#3a3e45;letter-spacing:-0.054px;left:827.6px;">Tasks</span>
<span class="t" style="top:294px;font-size:15.5px;color:#6d757d;transform-origin:0 50%;transform:scaleX(0.9376);left:917px;">DONE</span>
<span class="t" style="top:323px;font-size:31.5px;color:#24272c;font-weight:700;transform-origin:0 50%;transform:scaleX(0.9188);left:939px;">25</span>
<span class="t" style="top:294px;font-size:15.5px;color:#6d757d;transform-origin:0 50%;transform:scaleX(0.9219);left:1015.6px;">TO DO</span>
<span class="t" style="top:323px;font-size:31.5px;color:#24272c;font-weight:700;transform-origin:0 50%;transform:scaleX(0.9188);left:1037px;">25</span>
<span class="t" style="top:294px;font-size:15.5px;color:#6d757d;transform-origin:0 50%;transform:scaleX(0.9413);left:1113.4px;">COMING SOON</span>
<span class="t" style="top:323px;font-size:31.5px;color:#24272c;font-weight:700;transform-origin:0 50%;transform:scaleX(0.9188);left:1135.2px;">25</span>
<span class="t" style="top:246px;font-size:17px;color:#3a3e45;letter-spacing:0.502px;left:1294.8px;">Conversations</span>
<span class="t" style="top:294px;font-size:15.5px;color:#6d757d;transform-origin:0 50%;transform:scaleX(0.9381);left:1384.8px;">AUTHORED</span>
<span class="t" style="top:323px;font-size:31.5px;color:#24272c;font-weight:700;transform-origin:0 50%;transform:scaleX(0.9127);left:1406.8px;">2</span>
<span class="t" style="top:294px;font-size:15.5px;color:#6d757d;transform-origin:0 50%;transform:scaleX(0.9150);left:1497.6px;">RESOLVED</span>
<span class="t" style="top:323px;font-size:31.5px;color:#24272c;font-weight:700;transform-origin:0 50%;transform:scaleX(0.9188);left:1519.4px;">25</span>
<span class="t" style="top:294px;font-size:15.5px;color:#6d757d;transform-origin:0 50%;transform:scaleX(0.8717);left:1683.8px;width:37px;overflow:hidden;">PART</span>
<span class="t" style="top:323px;font-size:31.5px;color:#24272c;font-weight:700;transform-origin:0 50%;transform:scaleX(0.9188);left:1706px;width:40px;overflow:hidden;">25</span>
<span class="t" style="top:411px;font-size:24px;color:#111214;font-weight:700;letter-spacing:-0.288px;left:268.4px;">My Reviews</span>
<span class="t" style="top:412px;font-size:17.5px;color:#aab1b8;letter-spacing:0.337px;left:435px;">Participant</span>
<span class="t" style="top:412px;font-size:17.5px;color:#2f8fc6;letter-spacing:0.211px;left:545.6px;">Owner</span>
<span class="t" style="top:412px;font-size:17.5px;color:#565c64;letter-spacing:0.254px;left:639.8px;">View All</span>
<span class="t" style="top:482px;font-size:14.5px;color:#6d747c;letter-spacing:0.504px;left:283px;">Order</span>
<span class="t" style="top:482px;font-size:14.5px;color:#6d747c;letter-spacing:0.515px;left:335.8px;">Status</span>
<span class="t" style="top:482px;font-size:14.5px;color:#6d747c;letter-spacing:0.150px;left:392.3px;">Review Name</span>
<span class="t" style="top:482px;font-size:14.5px;color:#6d747c;letter-spacing:0.217px;left:745px;">Due Date</span>
<span class="t" style="top:530px;font-size:15px;color:#363a41;left:252.60000000000002px;width:100px;text-align:center;">1</span>
<span class="t" style="top:530px;font-size:15px;color:#363a41;letter-spacing:-0.032px;-webkit-text-stroke:0.2px #363a41;left:396.2px;">Space Agency Critical Design Review</span>
<span class="t" style="top:530px;font-size:15px;color:#363a41;letter-spacing:0.192px;-webkit-text-stroke:0.2px #363a41;left:783px;">02/18/2025</span>
<span class="t" style="top:579px;font-size:15px;color:#363a41;left:252.60000000000002px;width:100px;text-align:center;">2</span>
<span class="t" style="top:579px;font-size:15px;color:#363a41;letter-spacing:-0.084px;-webkit-text-stroke:0.2px #363a41;left:396.2px;">Drone Design Weekly Peer Review</span>
<span class="t" style="top:579px;font-size:15px;color:#363a41;letter-spacing:0.192px;-webkit-text-stroke:0.2px #363a41;left:783px;">02/18/2025</span>
<span class="t" style="top:489px;font-size:17px;color:#2f333a;letter-spacing:0.419px;-webkit-text-stroke:0.3px #2f333a;left:954.7px;">Patriot Missile</span>
<span class="t" style="top:511px;font-size:14.5px;color:#8a9299;letter-spacing:0.368px;left:954.7px;">Last Updated 01/02/2025 2:30pm</span>
<span class="t" style="top:499px;font-size:15px;color:#565c64;letter-spacing:0.220px;left:1649.6px;">Details</span>
<span class="t" style="top:562px;font-size:36px;color:#24272c;font-weight:700;letter-spacing:0.477px;left:954.4px;">75</span>
<span class="t" style="top:563px;font-size:17px;color:#2f333a;letter-spacing:0.238px;-webkit-text-stroke:0.2px #2f333a;left:1013px;">Tasks Total</span>
<span class="t" style="top:646px;font-size:15.5px;color:#6d757d;transform-origin:0 50%;transform:scaleX(0.9420);left:954.8px;">DONE</span>
<span class="t" style="top:646px;font-size:15.5px;color:#6d757d;transform-origin:0 50%;transform:scaleX(0.9219);left:1053.6px;">TO DO</span>
<span class="t" style="top:646px;font-size:15.5px;color:#6d757d;transform-origin:0 50%;transform:scaleX(0.9448);left:1151px;">COMING SOON</span>
<span class="t" style="top:675px;font-size:31.5px;color:#24272c;font-weight:700;transform-origin:0 50%;transform:scaleX(0.9131);left:977.4px;">25</span>
<span class="t" style="top:675px;font-size:31.5px;color:#24272c;font-weight:700;transform-origin:0 50%;transform:scaleX(0.9131);left:1075.4px;">25</span>
<span class="t" style="top:675px;font-size:31.5px;color:#24272c;font-weight:700;transform-origin:0 50%;transform:scaleX(0.9131);left:1173.4px;">25</span>
<span class="t" style="top:784px;font-size:15px;color:#3a3e45;transform-origin:0 50%;transform:scaleX(0.9588);left:954.8px;">Lead</span>
<span class="t" style="top:783px;font-size:15px;color:#3a3e45;letter-spacing:0.268px;-webkit-text-stroke:0.2px #3a3e45;left:1582.3px;">Closed 03/03/2024</span>
<span class="t" style="top:861px;font-size:24px;color:#111214;font-weight:700;transform-origin:0 50%;transform:scaleX(0.9767);left:268.2px;">My Tasks</span>
<span class="t" style="top:861px;font-size:17.5px;color:#565c64;letter-spacing:0.254px;left:403px;">View All</span>
<span class="t" style="top:933px;font-size:14.5px;color:#6d747c;letter-spacing:0.464px;left:283px;">Order</span>
<span class="t" style="top:933px;font-size:14.5px;color:#6d747c;letter-spacing:0.482px;left:336px;">Status</span>
<span class="t" style="top:933px;font-size:14.5px;color:#6d747c;letter-spacing:0.241px;left:392.8px;">Type</span>
<span class="t" style="top:933px;font-size:14.5px;color:#6d747c;letter-spacing:-0.050px;left:439px;">ID</span>
<span class="t" style="top:933px;font-size:14.5px;color:#6d747c;letter-spacing:0.208px;left:523.8px;">Task Name</span>
<span class="t" style="top:933px;font-size:14.5px;color:#6d747c;letter-spacing:0.177px;left:711.2px;">Review Name</span>
<span class="t" style="top:933px;font-size:14.5px;color:#6d747c;letter-spacing:0.217px;left:843px;">Due Date</span>
<span class="t" style="top:981px;font-size:15px;color:#363a41;left:253.2px;width:100px;text-align:center;">1</span>
<span class="t" style="top:981px;font-size:15px;color:#7c858d;letter-spacing:-0.183px;left:439px;">DDW-13-<span style="font-size:.78em;letter-spacing:-0.4px;margin-left:0.5px">...</span></span>
<span class="t" style="top:981px;font-size:15px;color:#363a41;letter-spacing:-0.103px;-webkit-text-stroke:0.2px #363a41;left:526.4px;">Review Items</span>
<span class="t" style="top:981px;font-size:15px;color:#7c858d;letter-spacing:0.107px;left:711.6px;">Drone Desig<span style="font-size:.78em;letter-spacing:-0.4px;margin-left:0.5px">...</span></span>
<span class="t" style="top:981px;font-size:15px;color:#363a41;letter-spacing:0.637px;-webkit-text-stroke:0.2px #363a41;left:862.2px;">02/2<span style="font-size:.78em;letter-spacing:-0.4px;margin-left:0.5px">...</span></span>
<span class="t" style="top:1030px;font-size:15px;color:#363a41;left:253.2px;width:100px;text-align:center;">2</span>
<span class="t" style="top:1030px;font-size:15px;color:#7c858d;transform-origin:0 50%;transform:scaleX(0.9322);left:439px;">SAC-14-T<span style="font-size:.78em;letter-spacing:-0.4px;margin-left:0.5px">...</span></span>
<span class="t" style="top:1030px;font-size:15px;color:#363a41;transform-origin:0 50%;transform:scaleX(0.9577);-webkit-text-stroke:0.2px #363a41;left:526.4px;">Resolve DR--11-T-2-C-7</span>
<span class="t" style="top:1030px;font-size:15px;color:#7c858d;letter-spacing:0.122px;left:711.6px;">Space Agenc<span style="font-size:.78em;letter-spacing:-0.4px;margin-left:0.5px">...</span></span>
<span class="t" style="top:1030px;font-size:15px;color:#363a41;transform-origin:0 50%;transform:scaleX(0.9615);-webkit-text-stroke:0.2px #363a41;left:862.2px;">02/17<span style="font-size:.78em;letter-spacing:-0.4px;margin-left:0.5px">...</span></span>
<span class="t" style="top:1079px;font-size:15px;color:#363a41;left:253.2px;width:100px;text-align:center;">3</span>
<span class="t" style="top:1079px;font-size:15px;color:#7c858d;transform-origin:0 50%;transform:scaleX(0.9322);left:439px;">SAC-14-T<span style="font-size:.78em;letter-spacing:-0.4px;margin-left:0.5px">...</span></span>
<span class="t" style="top:1079px;font-size:15px;color:#363a41;transform-origin:0 50%;transform:scaleX(0.9491);-webkit-text-stroke:0.2px #363a41;left:526.4px;">Resolve DR--11-T-2-C-1</span>
<span class="t" style="top:1079px;font-size:15px;color:#7c858d;letter-spacing:0.122px;left:711.6px;">Space Agenc<span style="font-size:.78em;letter-spacing:-0.4px;margin-left:0.5px">...</span></span>
<span class="t" style="top:1079px;font-size:15px;color:#363a41;transform-origin:0 50%;transform:scaleX(0.9615);-webkit-text-stroke:0.2px #363a41;left:862.2px;">02/17<span style="font-size:.78em;letter-spacing:-0.4px;margin-left:0.5px">...</span></span>
<span class="t" style="top:1128px;font-size:15px;color:#363a41;left:253.2px;width:100px;text-align:center;">4</span>
<span class="t" style="top:1128px;font-size:15px;color:#7c858d;transform-origin:0 50%;transform:scaleX(0.9322);left:439px;">SAC-14-T<span style="font-size:.78em;letter-spacing:-0.4px;margin-left:0.5px">...</span></span>
<span class="t" style="top:1128px;font-size:15px;color:#363a41;letter-spacing:-0.265px;-webkit-text-stroke:0.2px #363a41;left:526.4px;">Resolve DR--11-T-2-C-2</span>
<span class="t" style="top:1128px;font-size:15px;color:#7c858d;letter-spacing:0.122px;left:711.6px;">Space Agenc<span style="font-size:.78em;letter-spacing:-0.4px;margin-left:0.5px">...</span></span>
<span class="t" style="top:1128px;font-size:15px;color:#363a41;transform-origin:0 50%;transform:scaleX(0.9615);-webkit-text-stroke:0.2px #363a41;left:862.2px;">02/17<span style="font-size:.78em;letter-spacing:-0.4px;margin-left:0.5px">...</span></span>
<span class="t" style="top:1177px;font-size:15px;color:#363a41;left:253.2px;width:100px;text-align:center;">5</span>
<span class="t" style="top:1177px;font-size:15px;color:#7c858d;transform-origin:0 50%;transform:scaleX(0.9166);left:439px;">SAC-14-T-1</span>
<span class="t" style="top:1177px;font-size:15px;color:#363a41;letter-spacing:0.036px;-webkit-text-stroke:0.2px #363a41;left:526.4px;">Review Structure</span>
<span class="t" style="top:1177px;font-size:15px;color:#7c858d;letter-spacing:0.122px;left:711.6px;">Space Agenc<span style="font-size:.78em;letter-spacing:-0.4px;margin-left:0.5px">...</span></span>
<span class="t" style="top:1177px;font-size:15px;color:#363a41;transform-origin:0 50%;transform:scaleX(0.9615);-webkit-text-stroke:0.2px #363a41;left:862.2px;">02/17<span style="font-size:.78em;letter-spacing:-0.4px;margin-left:0.5px">...</span></span>
<span class="t" style="top:861px;font-size:24px;color:#111214;font-weight:700;letter-spacing:0.005px;left:1027px;">My Conversations</span>
<span class="t" style="top:861px;font-size:17.5px;color:#2f8fc6;letter-spacing:-0.194px;left:1264px;">Reviewer</span>
<span class="t" style="top:861px;font-size:17.5px;color:#aab1b8;letter-spacing:-0.183px;left:1356px;">Resolver</span>
<span class="t" style="top:861px;font-size:17.5px;color:#aab1b8;letter-spacing:0.452px;left:1444.4px;">Mentioned</span>
<span class="t" style="top:861px;font-size:17.5px;color:#565c64;letter-spacing:0.229px;left:1571.6px;">View All</span>
<span class="t" style="top:932px;font-size:14.5px;color:#6d747c;letter-spacing:0.504px;left:1041.6px;">Order</span>
<span class="t" style="top:932px;font-size:14.5px;color:#6d747c;letter-spacing:0.515px;left:1095.6px;">Status</span>
<span class="t" style="top:932px;font-size:14.5px;color:#6d747c;letter-spacing:0.609px;left:1151px;">Priority</span>
<span class="t" style="top:932px;font-size:14.5px;color:#6d747c;letter-spacing:0.369px;left:1212.3px;">Conversation ID</span>
<span class="t" style="top:932px;font-size:14.5px;color:#6d747c;letter-spacing:-0.035px;left:1335.3px;">Task ID</span>
<span class="t" style="top:981px;font-size:15px;color:#363a41;left:1012px;width:100px;text-align:center;">1</span>
<span class="t" style="top:981px;font-size:15.6px;color:#666e76;font-weight:700;left:1126.8px;width:100px;text-align:center;">!!!</span>
<span class="t" style="top:981px;font-size:15px;color:#363a41;transform-origin:0 50%;transform:scaleX(0.9533);-webkit-text-stroke:0.2px #363a41;left:1212.3px;">SAC-14-T-1-C-2</span>
<span class="t" style="top:981px;font-size:15px;color:#7c858d;transform-origin:0 50%;transform:scaleX(0.9078);left:1335.3px;">SAC-14-T-1</span>
<span class="t" style="top:1030px;font-size:15px;color:#363a41;left:1012px;width:100px;text-align:center;">2</span>
<span class="t" style="top:1030px;font-size:15.6px;color:#666e76;font-weight:700;left:1126.8px;width:100px;text-align:center;">!!!</span>
<span class="t" style="top:1030px;font-size:15px;color:#363a41;transform-origin:0 50%;transform:scaleX(0.9293);-webkit-text-stroke:0.2px #363a41;left:1212.3px;">SAC-14-T-1-C-1</span>
<span class="t" style="top:1030px;font-size:15px;color:#7c858d;transform-origin:0 50%;transform:scaleX(0.9078);left:1335.3px;">SAC-14-T-1</span>
<div class="a" style="left:1717.5px;top:289.5px;width:48px;height:48px;border-radius:50%;background:#fff;border:1px solid #e8eaec;box-shadow:0 2px 5px rgba(0,0,0,.14)"></div>
<svg class="a" style="left:1731px;top:304px" width="22" height="20" viewBox="0 0 22 20"><path d="M3.5 10 H17.5 M12.5 4.8 L17.7 10 L12.5 15.2" fill="none" stroke="#7f8790" stroke-width="1.4"/></svg>
<svg class="a" style="left:0;top:0" width="1994" height="1304" viewBox="0 0 1994 1304" shape-rendering="geometricPrecision"><polygon fill="#104e79" stroke="#104e79" stroke-width="0.6" stroke-linejoin="round" points="1752.9,0.0 1722.8,52.3 1783.0,52.3"/><polygon fill="#104e79" stroke="#104e79" stroke-width="0.6" stroke-linejoin="round" points="1722.8,52.3 1692.6,104.6 1752.9,104.6"/><polygon fill="#abd0e5" stroke="#abd0e5" stroke-width="0.6" stroke-linejoin="round" points="1783.0,52.3 1752.9,104.6 1813.2,104.6"/><polygon fill="#5795bd" stroke="#5795bd" stroke-width="0.6" stroke-linejoin="round" points="1783.0,52.3 1843.3,52.3 1873.5,104.6 1813.2,104.6"/><polygon fill="#abd0e5" stroke="#abd0e5" stroke-width="0.6" stroke-linejoin="round" points="1813.2,104.6 1873.5,104.6 1903.6,156.9 1843.3,156.9"/><polygon fill="#104e79" stroke="#104e79" stroke-width="0.6" stroke-linejoin="round" points="1813.2,0.0 1873.5,0.0 1843.3,52.3 1783.0,52.3"/><polygon fill="#012b49" stroke="#012b49" stroke-width="0.6" stroke-linejoin="round" points="1873.5,0.0 1903.6,52.3 1873.5,104.6 1843.3,52.3"/><polygon fill="#5795bd" stroke="#5795bd" stroke-width="0.6" stroke-linejoin="round" points="1903.6,52.3 1933.8,104.6 1903.6,156.9 1873.5,104.6"/><polygon fill="#ffecbb" stroke="#ffecbb" stroke-width="0.6" stroke-linejoin="round" points="1903.6,52.3 1963.9,52.3 1994.1,104.6 1933.8,104.6"/><polygon fill="#ffbf00" stroke="#ffbf00" stroke-width="0.6" stroke-linejoin="round" points="1933.8,104.6 1994.1,104.6 1933.8,209.2 1903.6,156.9"/><polygon fill="#ffbf00" stroke="#ffbf00" stroke-width="0.6" stroke-linejoin="round" points="1843.3,156.9 1903.6,156.9 1873.5,209.2 1813.2,209.2"/><polygon fill="#ffecbb" stroke="#ffecbb" stroke-width="0.6" stroke-linejoin="round" points="1903.6,156.9 1933.8,209.2 1873.5,209.2"/><polygon fill="#104e79" stroke="#104e79" stroke-width="0.6" stroke-linejoin="round" points="1813.2,209.2 1873.5,209.2 1843.3,261.5"/><polygon fill="#012b49" stroke="#012b49" stroke-width="0.6" stroke-linejoin="round" points="1873.5,209.2 1903.6,261.5 1873.5,313.8 1843.3,261.5"/><polygon fill="#abd0e5" stroke="#abd0e5" stroke-width="0.6" stroke-linejoin="round" points="1873.5,209.2 1933.8,209.2 1963.9,261.5 1903.6,261.5"/><polygon fill="#5795bd" stroke="#5795bd" stroke-width="0.6" stroke-linejoin="round" points="1843.3,261.5 1873.5,313.8 1813.2,313.8"/><polygon fill="#5795bd" stroke="#5795bd" stroke-width="0.6" stroke-linejoin="round" points="1903.6,261.5 1933.8,313.8 1873.5,313.8"/><polygon fill="#ffecbb" stroke="#ffecbb" stroke-width="0.6" stroke-linejoin="round" points="1903.6,261.5 1963.9,261.5 1994.1,313.8 1933.8,313.8"/><polygon fill="#abd0e5" stroke="#abd0e5" stroke-width="0.6" stroke-linejoin="round" points="47.5,616.3 95.9,588.5 95.9,644.0 47.5,671.8"/><polygon fill="#ffecbb" stroke="#ffecbb" stroke-width="0.6" stroke-linejoin="round" points="95.9,588.5 144.3,560.8 144.3,616.3 95.9,644.0"/><polygon fill="#ffbf00" stroke="#ffbf00" stroke-width="0.6" stroke-linejoin="round" points="144.3,560.8 241.1,616.3 192.7,644.0 144.3,616.3"/><polygon fill="#ffecbb" stroke="#ffecbb" stroke-width="0.6" stroke-linejoin="round" points="241.1,616.3 241.1,671.8 192.7,644.0"/><polygon fill="#ffbf00" stroke="#ffbf00" stroke-width="0.6" stroke-linejoin="round" points="192.7,644.0 241.1,671.8 241.1,727.3 192.7,699.5"/><polygon fill="#012b49" stroke="#012b49" stroke-width="0.6" stroke-linejoin="round" points="47.5,671.8 95.9,644.0 144.3,671.8 95.9,699.5"/><polygon fill="#5795bd" stroke="#5795bd" stroke-width="0.6" stroke-linejoin="round" points="95.9,644.0 144.3,616.3 192.7,644.0 144.3,671.8"/><polygon fill="#abd0e5" stroke="#abd0e5" stroke-width="0.6" stroke-linejoin="round" points="144.3,671.8 192.7,644.0 192.7,699.5 144.3,727.3"/><polygon fill="#5795bd" stroke="#5795bd" stroke-width="0.6" stroke-linejoin="round" points="95.9,699.5 144.3,671.8 144.3,727.3 95.9,755.0"/><polygon fill="#ffecbb" stroke="#ffecbb" stroke-width="0.6" stroke-linejoin="round" points="144.3,727.3 192.7,699.5 241.1,727.3 192.7,755.0"/><polygon fill="#abd0e5" stroke="#abd0e5" stroke-width="0.6" stroke-linejoin="round" points="95.9,755.0 144.3,727.3 192.7,755.0 144.3,782.8"/><polygon fill="#f2f8fd" stroke="#f2f8fd" stroke-width="0.6" stroke-linejoin="round" points="192.7,755.0 241.1,727.3 241.1,782.8 192.7,810.5"/><polygon fill="#5795bd" stroke="#5795bd" stroke-width="0.6" stroke-linejoin="round" points="144.3,782.8 192.7,755.0 192.7,810.5 144.3,838.3"/><polygon fill="#104e79" stroke="#104e79" stroke-width="0.6" stroke-linejoin="round" points="47.5,671.8 95.9,699.5 95.9,755.0 144.3,782.8 144.3,838.3 47.5,782.8"/><polygon fill="#abd0e5" stroke="#abd0e5" stroke-width="0.6" stroke-linejoin="round" points="-0.9,810.5 47.5,782.8 47.5,838.3 -0.9,866.0"/><polygon fill="#ffecbb" stroke="#ffecbb" stroke-width="0.6" stroke-linejoin="round" points="47.5,782.8 95.9,810.5 47.5,838.3"/><polygon fill="#5795bd" stroke="#5795bd" stroke-width="0.6" stroke-linejoin="round" points="47.5,838.3 95.9,810.5 144.3,838.3 95.9,866.0"/><polygon fill="#012b49" stroke="#012b49" stroke-width="0.6" stroke-linejoin="round" points="-0.9,866.0 47.5,838.3 95.9,866.0 47.5,893.8"/><polygon fill="#ffecbb" stroke="#ffecbb" stroke-width="0.6" stroke-linejoin="round" points="144.3,838.3 192.7,810.5 192.7,866.0"/><polygon fill="#ffbf00" stroke="#ffbf00" stroke-width="0.6" stroke-linejoin="round" points="144.3,838.3 192.7,866.0 192.7,921.5 144.3,893.8"/><polygon fill="#abd0e5" stroke="#abd0e5" stroke-width="0.6" stroke-linejoin="round" points="95.9,866.0 144.3,838.3 144.3,893.8 95.9,921.5"/><polygon fill="#5795bd" stroke="#5795bd" stroke-width="0.6" stroke-linejoin="round" points="47.5,893.8 95.9,866.0 95.9,921.5 47.5,949.3"/><polygon fill="#ffecbb" stroke="#ffecbb" stroke-width="0.6" stroke-linejoin="round" points="95.9,921.5 144.3,893.8 192.7,921.5 144.3,949.3"/><polygon fill="#abd0e5" stroke="#abd0e5" stroke-width="0.6" stroke-linejoin="round" points="47.5,949.3 95.9,921.5 144.3,949.3 95.9,977.0"/><polygon fill="#f2f8fd" stroke="#f2f8fd" stroke-width="0.6" stroke-linejoin="round" points="144.3,949.3 192.7,921.5 192.7,977.0 144.3,1004.8"/><polygon fill="#5795bd" stroke="#5795bd" stroke-width="0.6" stroke-linejoin="round" points="95.9,977.0 144.3,949.3 144.3,1004.8 95.9,1032.5"/><polygon fill="#104e79" stroke="#104e79" stroke-width="0.6" stroke-linejoin="round" points="-0.9,866.0 47.5,893.8 47.5,949.3 95.9,977.0 95.9,1032.5 -0.9,977.0"/><polyline fill="none" stroke="#1c1c1c" stroke-width="1.0" stroke-opacity="0.95" stroke-linejoin="miter" points="1903.6,52.3 1963.9,52.3 1994.1,104.6 1933.8,209.2 1963.9,261.5 1994.1,313.8"/><polyline fill="none" stroke="#1c1c1c" stroke-width="0.6" stroke-opacity="0.5" stroke-linejoin="miter" points="1843.3,156.9 1813.2,209.2"/><polyline fill="none" stroke="#888" stroke-width="0.6" stroke-opacity="0.6" stroke-linejoin="miter" points="1813.2,104.6 1843.3,156.9"/><polyline fill="none" stroke="#1c1c1c" stroke-width="0.5" stroke-opacity="0.4" stroke-linejoin="miter" points="1813.2,209.2 1843.3,261.5"/><polyline fill="none" stroke="#1c1c1c" stroke-width="0.9" stroke-opacity="0.85" stroke-linejoin="miter" points="47.5,616.3 121.6,573.8"/><polyline fill="none" stroke="#9a9a9a" stroke-width="0.8" stroke-opacity="0.7" stroke-linejoin="miter" points="121.6,573.8 144.3,560.8"/><polyline fill="none" stroke="#1c1c1c" stroke-width="0.9" stroke-opacity="0.85" stroke-linejoin="miter" points="95.9,1032.5 121.1,1018.1"/><polyline fill="none" stroke="#9a9a9a" stroke-width="0.8" stroke-opacity="0.7" stroke-linejoin="miter" points="121.1,1018.1 144.3,1004.8"/><polyline fill="none" stroke="#1c1c1c" stroke-width="0.9" stroke-opacity="0.85" stroke-linejoin="miter" points="-0.9,810.5 47.5,782.8"/><polyline fill="none" stroke="#1c1c1c" stroke-width="0.9" stroke-opacity="0.85" stroke-linejoin="miter" points="-0.9,977.0 95.9,1032.5"/><polyline fill="none" stroke="#9a9a9a" stroke-width="0.8" stroke-opacity="0.7" stroke-linejoin="miter" points="144.3,560.8 241.1,616.3 241.1,782.8 192.7,810.5"/><polyline fill="none" stroke="#9a9a9a" stroke-width="0.8" stroke-opacity="0.7" stroke-linejoin="miter" points="192.7,810.5 192.7,977.0 144.3,1004.8"/><polyline fill="none" stroke="#9a9a9a" stroke-width="0.7" stroke-opacity="0.6" stroke-linejoin="miter" points="47.5,616.3 47.5,671.8"/></svg>
</div></body></html>
